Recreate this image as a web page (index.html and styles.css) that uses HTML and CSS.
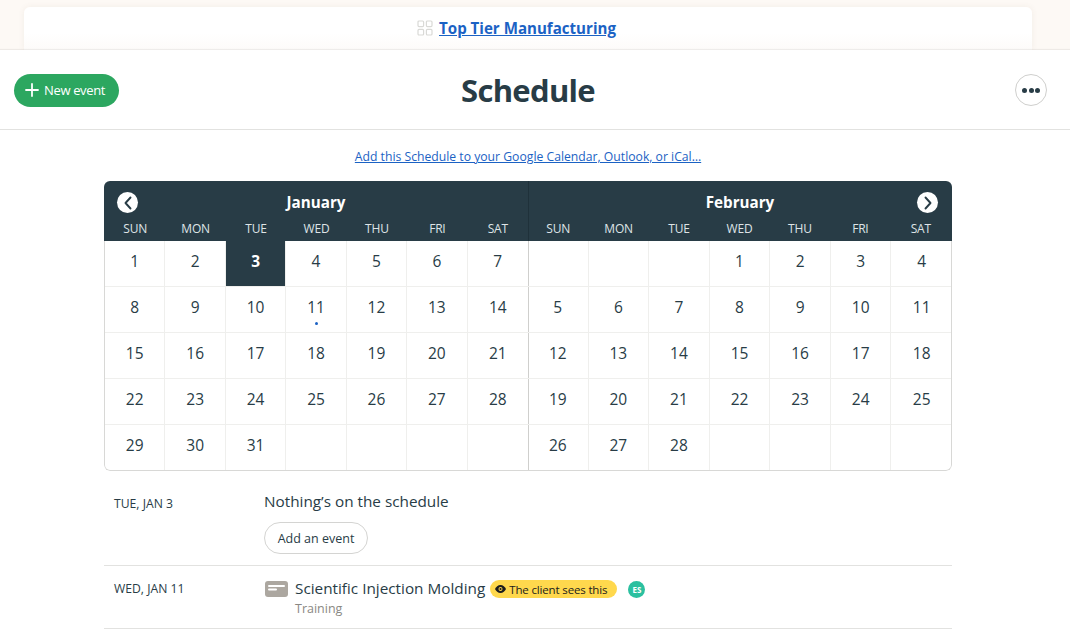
FILE: index.html
```html
<!DOCTYPE html>
<html lang="en">
<head>
<meta charset="utf-8">
<title>Schedule</title>
<link rel="stylesheet" href="styles.css">
</head>
<body>
<div class="project-bar">
  <svg class="project-icon" width="16" height="16" viewBox="0 0 16 16" fill="none" stroke="#d9d9d6" stroke-width="1.2"><rect x="1" y="1" width="5.6" height="5.6" rx="1"/><rect x="9.4" y="1" width="5.6" height="5.6" rx="1"/><rect x="1" y="9.4" width="5.6" height="5.6" rx="1"/><rect x="9.4" y="9.4" width="5.6" height="5.6" rx="1"/></svg>
  <a class="project-link" href="#">Top Tier Manufacturing</a>
</div>
<main class="panel">
  <header class="page-head">
    <a class="new-event" href="#">
      <svg width="14" height="14" viewBox="0 0 14 14" stroke="#fff" stroke-width="1.8" stroke-linecap="round"><path d="M7 1v12M1 7h12"/></svg>
      <span>New event</span>
    </a>
    <h1 class="page-title">Schedule</h1>
    <button class="more" aria-label="More"><i></i><i></i><i></i></button>
  </header>
  <div class="content">
    <p class="sub-link"><a href="#">Add this Schedule to your Google Calendar, Outlook, or iCal…</a></p>
    <section class="calendar">
      <div class="month">
        <div class="month-head">
          <button class="nav nav-prev" aria-label="Previous"><svg width="10" height="14" viewBox="0 0 10 14" fill="none" stroke="#283c46" stroke-width="1.9" stroke-linecap="round" stroke-linejoin="round"><path d="M7.5 1.5 2.5 7l5 5.5"/></svg></button>
          <div class="month-name">January</div>
          <div class="dows"><span>SUN</span><span>MON</span><span>TUE</span><span>WED</span><span>THU</span><span>FRI</span><span>SAT</span></div>
        </div>
        <div class="days">
          <span>1</span><span>2</span><span class="today">3</span><span>4</span><span>5</span><span>6</span><span>7</span>
          <span>8</span><span>9</span><span>10</span><span class="has-event">11</span><span>12</span><span>13</span><span>14</span>
          <span>15</span><span>16</span><span>17</span><span>18</span><span>19</span><span>20</span><span>21</span>
          <span>22</span><span>23</span><span>24</span><span>25</span><span>26</span><span>27</span><span>28</span>
          <span>29</span><span>30</span><span>31</span><span></span><span></span><span></span><span></span>
        </div>
      </div>
      <div class="month">
        <div class="month-head">
          <div class="month-name">February</div>
          <button class="nav nav-next" aria-label="Next"><svg width="10" height="14" viewBox="0 0 10 14" fill="none" stroke="#283c46" stroke-width="1.9" stroke-linecap="round" stroke-linejoin="round"><path d="M2.5 1.5 7.5 7l-5 5.5"/></svg></button>
          <div class="dows"><span>SUN</span><span>MON</span><span>TUE</span><span>WED</span><span>THU</span><span>FRI</span><span>SAT</span></div>
        </div>
        <div class="days">
          <span></span><span></span><span></span><span>1</span><span>2</span><span>3</span><span>4</span>
          <span>5</span><span>6</span><span>7</span><span>8</span><span>9</span><span>10</span><span>11</span>
          <span>12</span><span>13</span><span>14</span><span>15</span><span>16</span><span>17</span><span>18</span>
          <span>19</span><span>20</span><span>21</span><span>22</span><span>23</span><span>24</span><span>25</span>
          <span>26</span><span>27</span><span>28</span><span></span><span></span><span></span><span></span>
        </div>
      </div>
    </section>
    <section class="agenda">
      <div class="agenda-row first">
        <div class="agenda-date">TUE, JAN 3</div>
        <div class="agenda-body">
          <div class="agenda-title">Nothing’s on the schedule</div>
          <a class="add-event" href="#">Add an event</a>
        </div>
      </div>
      <div class="agenda-row second">
        <div class="agenda-date">WED, JAN 11</div>
        <div class="agenda-body">
          <div class="event-line">
            <svg class="event-icon" width="23" height="16" viewBox="0 0 23 16"><rect width="23" height="16" rx="3" fill="#aca7a0"/><rect x="3" y="4" width="17" height="2" rx="1" fill="#fff"/><rect x="3" y="7.5" width="9" height="2" rx="1" fill="#fff"/></svg>
            <span class="agenda-title">Scientific Injection Molding</span>
            <span class="client-badge">
              <svg width="11" height="8" viewBox="0 0 11 8"><path d="M5.5 0C3 0 1 1.700 0 4c1 2.300 3 4 5.500 4S10 6.300 11 4C10 1.700 8 0 5.500 0Z" fill="#1c1c1c"/><circle cx="5.500" cy="4" r="2" fill="#ffd84d"/><circle cx="5.500" cy="4" r="1.100" fill="#1c1c1c"/></svg>
              The client sees this
            </span>
            <span class="avatar">ES</span>
          </div>
          <div class="event-type">Training</div>
        </div>
      </div>
    </section>
  </div>
</main>
</body>
</html>
```
FILE: styles.css
```css
* { box-sizing: border-box; }
html, body { height: 631px; overflow: hidden; }
body {
  margin: 0;
  background: #fdf9f5;
  color: #283c46;
  font-family: "Open Sans", "Noto Sans", sans-serif;
  padding-top: 7px;
}
a { color: #1b62c4; }
button { font: inherit; padding: 0; cursor: pointer; }

.project-bar {
  height: 43px;
  margin: 0 38px 0 24px;
  background: linear-gradient(#fff 60%, #fdfbf9);
  border-radius: 6px 6px 0 0;
  box-shadow: 0 0 6px rgba(120, 90, 60, .08);
  display: flex;
  align-items: center;
  justify-content: center;
  gap: 6px;
  padding-right: 23px;
  padding-bottom: 1px;
}
.project-link { font-size: 15.1px; font-weight: 700; }

.panel {
  position: relative;
  background: #fff;
  height: 581px;
  box-shadow: 0 -1px 1px rgba(0, 0, 0, .06);
}
.page-head {
  height: 80px;
  border-bottom: 1px solid #e2e2e0;
  display: grid;
  grid-template-columns: 1fr auto 1fr;
  align-items: center;
  padding: 1px 23px 0 14px;
}
.new-event {
  width: 105px;
  height: 33px;
  border-radius: 17px;
  background: #2ca760;
  color: #fff;
  display: flex;
  align-items: center;
  gap: 5px;
  padding-left: 11px;
  font-size: 13px;
  text-decoration: none;
  letter-spacing: -.35px;
}
.page-title {
  margin: 0 5px 0 0;
  font-size: 31px;
  font-weight: 700;
  line-height: 40px;
  letter-spacing: -.7px;
}
.more {
  justify-self: end;
  width: 32px;
  height: 32px;
  border-radius: 50%;
  border: 1px solid #cfcfcd;
  background: #fff;
  display: flex;
  align-items: center;
  justify-content: center;
  gap: 1.5px;
}
.more i { width: 5px; height: 5px; border-radius: 50%; background: #283c46; }

.content { padding-right: 14px; }
.sub-link {
  margin: 0;
  height: 51px;
  padding-top: 18px;
  text-align: center;
  font-size: 12.2px;
  line-height: 17px;
}

.calendar {
  position: relative;
  width: 848px;
  height: 290px;
  margin: 0 auto;
  display: grid;
  grid-template-columns: 1fr 1fr;
  border-radius: 6px;
  overflow: hidden;
}
.calendar::after {
  content: "";
  position: absolute;
  inset: 60px 0 0;
  border: 1px solid #d8d8d6;
  border-top: 0;
  border-radius: 0 0 6px 6px;
  pointer-events: none;
}
.month-head {
  position: relative;
  height: 60px;
  background: #283c46;
  color: #fff;
  text-align: center;
}
.month + .month .month-head { box-shadow: inset 1px 0 0 #1f313a; }
.month + .month .days { box-shadow: inset 1px 0 0 #cfcfcd; }
.month:first-child .days,
.month:first-child .dows { padding-left: 1px; }
.month + .month .dows { padding-right: 1px; }
.month-name {
  font-size: 15.2px;
  font-weight: 700;
  line-height: 20px;
  padding-top: 11px;
  height: 38px;
}
.nav {
  position: absolute;
  top: 11px;
  width: 21px;
  height: 21px;
  border: 0;
  border-radius: 50%;
  background: #fff;
  display: flex;
  align-items: center;
  justify-content: center;
}
.nav-prev { left: 13px; }
.nav-next { right: 14px; }
.dows {
  display: grid;
  grid-template-columns: repeat(7, 1fr);
  font-size: 12px;
  line-height: 20px;
  color: #dfe4e6;
  letter-spacing: -.2px;
}
.days {
  display: grid;
  grid-template-columns: repeat(7, 1fr);
  grid-auto-rows: 46px;
}
.days span {
  position: relative;
  display: flex;
  align-items: center;
  justify-content: center;
  padding-bottom: 5px;
  font-size: 15.5px;
  border-right: 1px solid #efefed;
  border-bottom: 1px solid #efefed;
}
.days span:nth-child(7n) { border-right: 0; }
.days span:nth-last-child(-n+7) { border-bottom: 0; padding-bottom: 6px; }
.days .today {
  background: #283c46;
  background-clip: padding-box;
  color: #fff;
  font-weight: 700;
}
.has-event::after {
  content: "";
  position: absolute;
  left: 50%;
  bottom: 7px;
  width: 3px;
  height: 3px;
  margin-left: -1px;
  border-radius: 50%;
  background: #1b62c4;
}

.agenda { width: 848px; margin: 0 auto; }
.agenda-row {
  display: grid;
  grid-template-columns: 160px 1fr;
  border-bottom: 1px solid #e2e2e0;
}
.agenda-row.first { height: 95px; padding-top: 20px; }
.agenda-row.second { height: 63px; padding-top: 12px; }
.agenda-date {
  padding: 4px 0 0 10px;
  font-size: 12.2px;
  line-height: 17px;
}
.agenda-row.second .agenda-date { padding-top: 2px; }
.agenda-title { font-size: 15.3px; line-height: 20px; }
.add-event {
  display: inline-flex;
  align-items: center;
  justify-content: center;
  width: 104px;
  height: 32px;
  margin-top: 11px;
  border: 1px solid #d4d4d2;
  border-radius: 16px;
  color: #283c46;
  font-size: 12.5px;
  text-decoration: none;
}
.event-line { display: flex; align-items: center; height: 22px; }
.event-line .agenda-title { margin-bottom: 2px; }
.event-icon { margin: 0 7px 0 1px; flex: none; }
.client-badge {
  display: inline-flex;
  align-items: center;
  gap: 3px;
  height: 18px;
  margin-left: 5px;
  padding: 0 10px 0 5px;
  border-radius: 9px;
  background: #ffd84d;
  color: #1c1c1c;
  font-size: 11.5px;
  letter-spacing: -.15px;
}
.avatar {
  width: 17px;
  height: 17px;
  margin-left: 11px;
  border-radius: 50%;
  background: #2bc0a0;
  color: #fff;
  font-size: 8px;
  font-weight: 700;
  display: flex;
  align-items: center;
  justify-content: center;
}
.event-type {
  padding-left: 31px;
  font-size: 12.5px;
  line-height: 18px;
  color: #8a8883;
}
```
